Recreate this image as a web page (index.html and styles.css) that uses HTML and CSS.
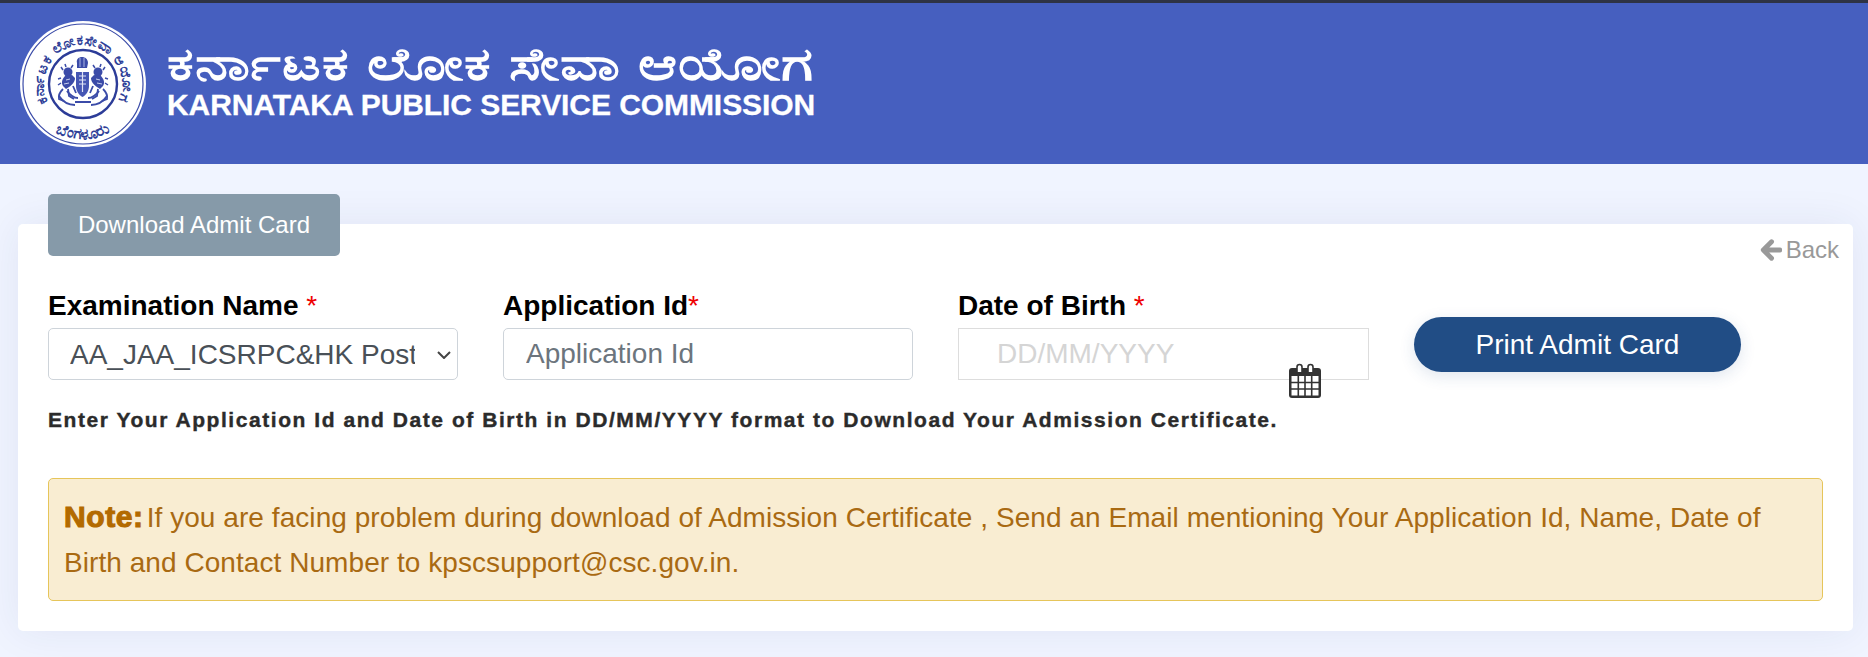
FILE: index.html
```html
<!DOCTYPE html>
<html lang="en">
<head>
  <meta charset="UTF-8">
  <title>Download Admit Card - KPSC</title>
  <link rel="stylesheet" href="styles.css">
</head>
<body>
  <header class="site-header">
    <svg class="seal" width="128" height="128" viewBox="0 0 128 128">
      <defs>
        <path id="sealTop" d="M29.400 82 A39 39 0 1 1 98.600 82"/>
        <path id="sealBottom" d="M25 103 A55 55 0 0 0 103 103"/>
        <filter id="soft"><feGaussianBlur stdDeviation="0.4"/></filter>
        <g id="lion">
          <circle cx="49" cy="52" r="4.500" fill="#3a4ba8"/>
          <path d="M46 56c-3 3-4 7-2 10l3 3 3-2c3-2 6-5 6-9l-3-3z" fill="#3a4ba8"/>
          <path d="M44 50l-2-3M47 47l-1-3M52 48l2-3M42 58l-3 1M42 63l-3 2" stroke="#3a4ba8" stroke-width="1.500"/>
          <path d="M47 60l4-1M45 64l5-1" stroke="#c9d0ee" stroke-width="1"/>
          <path d="M44 69c-3 3-5 6-4 10l5 2M49 69l1 7 5 3M54 66l3 7" fill="none" stroke="#3a4ba8" stroke-width="1.800"/>
        </g>
      </defs>
      <circle cx="64" cy="64" r="63" fill="#fff"/>
      <circle cx="64" cy="64" r="60" fill="none" stroke="#3a4ba8" stroke-width="1.200"/>
      <circle cx="64" cy="64" r="34" fill="#fff" stroke="#2c3c98" stroke-width="2.400"/>
      <text class="seal-text"><textPath href="#sealTop" textLength="158" lengthAdjust="spacing">ಕರ್ನಾಟಕ ಲೋಕಸೇವಾ ಆಯೋಗ</textPath></text>
      <text class="seal-text seal-text-bottom"><textPath href="#sealBottom" startOffset="50%">ಬೆಂಗಳೂರು</textPath></text>
      <!-- state emblem, simplified -->
      <g filter="url(#soft)">
        <path d="M58 48h10l1-5c0-4-3-6-6-6s-6 2-5 6z" fill="#3a4ba8"/>
        <path d="M61 38v9M65 38v9" stroke="#aab4e2" stroke-width="1"/>
        <use href="#lion"/>
        <use href="#lion" transform="translate(128 0) scale(-1 1)"/>
        <path d="M57 52h13v14c0 5-3 9-6.500 11C60 75 57 71 57 66z" fill="#4556b4"/>
        <path d="M60 56h7M60 60h7M60 64h7M63.500 52v20" stroke="#dfe3f6" stroke-width="1.200"/>
        <path d="M40 76c4 6 10 9 16 9M88 76c-4 6-10 9-16 9M48 71c3 4 7 7 11 7M80 71c-3 4-7 7-11 7M56 82h16" fill="none" stroke="#3a4ba8" stroke-width="2"/>
      </g>
    </svg>
    <div class="wordmark">
      <div class="wordmark-kn" lang="kn">ಕರ್ನಾಟಕ ಲೋಕ ಸೇವಾ ಆಯೋಗ</div>
      <div class="wordmark-en">KARNATAKA PUBLIC SERVICE COMMISSION</div>
    </div>
  </header>

  <main class="page">
    <section class="card">
      <div class="tab">Download Admit Card</div>
      <a class="back" href="#">
        <svg width="22" height="22" viewBox="0 0 20 20"><path d="M18 10H4M10.500 2.500 3 10l7.500 7.500" fill="none" stroke="#999" stroke-width="4.400" stroke-linecap="round" stroke-linejoin="round"/></svg>
        Back
      </a>

      <form class="admit-form">
        <div class="field">
          <label class="field-label">Examination Name <span class="req">*</span></label>
          <div class="select-wrap">
            <select class="control control-select">
              <option>AA_JAA_ICSRPC&amp;HK Post</option>
            </select>
            <svg class="select-arrow" width="14" height="8" viewBox="0 0 14 8"><path d="M1 1l6 6 6-6" fill="none" stroke="#444" stroke-width="2"/></svg>
          </div>
        </div>
        <div class="field">
          <label class="field-label">Application Id<span class="req">*</span></label>
          <input class="control" type="text" placeholder="Application Id">
        </div>
        <div class="field field-date">
          <label class="field-label">Date of Birth <span class="req">*</span></label>
          <div class="date-wrap">
            <input class="control control-date" type="text" placeholder="DD/MM/YYYY">
            <svg class="cal-icon" width="34" height="36" viewBox="0 0 34 36">
              <rect x="1" y="5" width="32" height="30" rx="3" fill="#333"/>
              <rect x="3.500" y="13" width="27" height="19.500" fill="#fff"/>
              <path d="M10.300 13v20M17 13v20M23.700 13v20M3 19.500h28M3 26h28" stroke="#333" stroke-width="1.600"/>
              <path d="M9 9V4a2.500 2.500 0 0 1 5 0v5M20 9V4a2.500 2.500 0 0 1 5 0v5" fill="#fff" stroke="#333" stroke-width="1.600"/>
            </svg>
          </div>
        </div>
        <button class="print-btn" type="button">Print Admit Card</button>
      </form>

      <p class="hint">Enter Your Application Id and Date of Birth in DD/MM/YYYY format to Download Your Admission Certificate.</p>

      <div class="note">
        <b class="note-title">Note:</b>If you are facing problem during download of Admission Certificate , Send an Email mentioning Your Application Id, Name, Date of Birth and Contact Number to kpscsupport@csc.gov.in.
      </div>
    </section>
  </main>
</body>
</html>
```

FILE: styles.css
```css
html, body {
  margin: 0;
  padding: 0;
}

body {
  background: #f0f4ff;
  font-family: "Liberation Sans", Arial, sans-serif;
  height: 657px;
  overflow: hidden;
}

.site-header {
  display: flex;
  align-items: center;
  gap: 20px;
  height: 161px;
  padding-left: 19px;
  background: #465fbf;
  border-top: 3px solid #2e3344;
}

.seal-text {
  font-family: "Noto Sans", sans-serif;
  font-size: 14px;
  font-weight: bold;
  fill: #2f3f98;
}

.seal-text-bottom {
  font-size: 15px;
  text-anchor: middle;
}

.wordmark {
  color: #fff;
  margin-top: -11px;
}

.wordmark-kn {
  font-family: "Noto Sans", "Noto Sans CJK SC", sans-serif;
  font-size: 46px;
  line-height: 50px;
  font-weight: 600;
  letter-spacing: 1px;
  white-space: nowrap;
  transform: scaleX(1.29);
  transform-origin: left center;
}

.wordmark-en {
  margin-top: 3px;
  font-size: 30px;
  line-height: 30px;
  font-weight: bold;
  letter-spacing: -0.07px;
  -webkit-text-stroke: 0.3px #fff;
}

.page {
  padding: 60px 15px 0 18px;
}

.card {
  position: relative;
  height: 407px;
  padding: 0 30px;
  background: #fff;
  border-radius: 5px;
  box-shadow: 0 0 40px rgba(40, 50, 110, 0.08);
}

.tab {
  position: relative;
  top: -30px;
  display: flex;
  align-items: center;
  justify-content: center;
  width: 292px;
  height: 62px;
  background: #869aa9;
  color: #fff;
  font-size: 24px;
  border-radius: 5px;
}

.back {
  position: absolute;
  top: 12px;
  right: 14px;
  display: flex;
  align-items: center;
  gap: 4px;
  color: #999;
  font-size: 24px;
  text-decoration: none;
}

.admit-form {
  display: flex;
  gap: 45px;
  margin-top: 5px;
}

.field {
  display: flex;
  flex-direction: column;
  width: 410px;
}

.field-date {
  width: 411px;
}

.field-label {
  font-size: 28px;
  font-weight: bold;
  line-height: 30px;
  color: #000;
  margin-bottom: 7px;
}

.req {
  color: #e00;
  font-weight: normal;
}

.control {
  box-sizing: border-box;
  width: 100%;
  height: 52px;
  padding: 0 22px;
  font-family: inherit;
  font-size: 28px;
  color: #495057;
  background: #fff;
  border: 1px solid #ced4da;
  border-radius: 5px;
  outline: none;
}

.control::placeholder {
  color: #6c757d;
}

.select-wrap,
.date-wrap {
  position: relative;
}

.control-select {
  appearance: none;
  padding: 0 42px 0 21px;
}

.select-arrow {
  position: absolute;
  left: 389px;
  top: 23px;
}

.control-date {
  padding-left: 38px;
  border-color: #ddd;
  border-radius: 0;
}

.control-date::placeholder {
  color: #d5d5d5;
}

.cal-icon {
  position: absolute;
  left: 330px;
  top: 35px;
}

.print-btn {
  align-self: flex-start;
  width: 327px;
  height: 55px;
  margin-top: 26px;
  background: #214d85;
  color: #fff;
  font-family: inherit;
  font-size: 28px;
  border: 0;
  border-radius: 28px;
  box-shadow: 0 4px 16px rgba(33, 77, 133, 0.14);
}

.hint {
  margin: 25px 0 0;
  font-size: 21px;
  line-height: 30px;
  font-weight: bold;
  color: #2b2b2b;
  letter-spacing: 1.55px;
  -webkit-text-stroke: 0.4px #2b2b2b;
  white-space: nowrap;
}

.note {
  box-sizing: border-box;
  height: 123px;
  margin-top: 43px;
  padding: 15px 15px;
  background: #f9edd2;
  border: 1px solid #e6c55a;
  border-radius: 5px;
  font-size: 28px;
  line-height: 45px;
  letter-spacing: 0.06px;
  color: #a96a12;
}

.note-title {
  font-size: 30px;
  margin-right: 3px;
  letter-spacing: 0.6px;
  color: #b36a00;
  -webkit-text-stroke: 1.1px #b36a00;
}
```
